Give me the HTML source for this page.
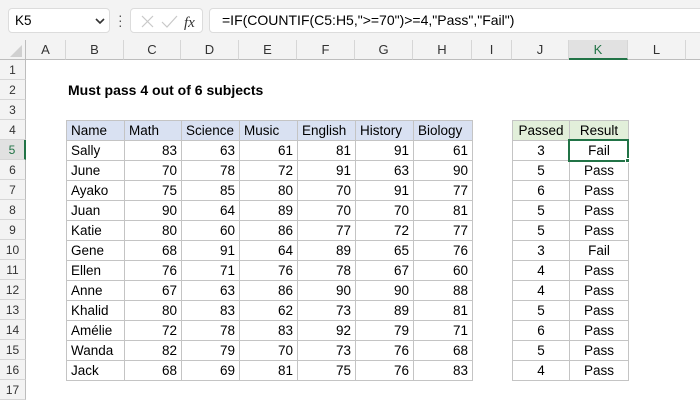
<!DOCTYPE html>
<html><head><meta charset="utf-8"><style>
*{box-sizing:border-box;margin:0;padding:0}
body{width:700px;height:400px;overflow:hidden;background:#fff;font-family:"Liberation Sans",sans-serif;font-size:13.5px;color:#000;position:relative}
.a{position:absolute}
.top{left:0;top:0;width:700px;height:40px;background:#f3f3f3}
.box{background:#fff;border:1px solid #dcdcdc;border-radius:4px}
.ch{top:40px;height:20px;background:#f3f3f3;border-right:1px solid #d6d6d6;border-bottom:1px solid #bdbdbd;text-align:center;line-height:19px;color:#333;font-size:13px}
.rh{left:0;width:26px;height:20px;background:#f3f3f3;border-bottom:1px solid #d6d6d6;border-right:1px solid #bdbdbd;text-align:center;line-height:20px;color:#333;font-size:12px}
.c{height:21px;border:1px solid #c4c4c4;line-height:20px;padding:0 4px;white-space:nowrap}
.r{text-align:right}.m{text-align:center}
</style></head><body>
<div class="a top"></div>
<div class="a box" style="left:8px;top:8px;width:102px;height:25px;line-height:23px;padding-left:6px">K5</div>
<svg class="a" style="left:95px;top:17px" width="10" height="8"><path d="M1 2 L5 6 L9 2" stroke="#333" stroke-width="1.6" fill="none"/></svg>
<div class="a" style="left:118px;top:13px;width:3px;height:14px;color:#555;font-size:14px;line-height:5px">·<br>·<br>·</div>
<div class="a box" style="left:130px;top:8px;width:73px;height:25px"></div>
<svg class="a" style="left:140px;top:14px" width="60" height="16"><path d="M2 2 L13 13 M13 2 L2 13" stroke="#c8c8c8" stroke-width="1.2"/><path d="M22 8 L27 13 L37 2" stroke="#c8c8c8" stroke-width="1.2" fill="none"/><text x="44" y="13" font-family="Liberation Serif" font-style="italic" font-size="15" fill="#333">fx</text></svg>
<div class="a box" style="left:209px;top:8px;width:500px;height:25px;line-height:23px;padding-left:12px;font-size:14px">=IF(COUNTIF(C5:H5,"&gt;=70")&gt;=4,"Pass","Fail")</div>
<div class="a" style="left:0;top:40px;width:26px;height:20px;background:#f3f3f3;border-right:1px solid #bdbdbd;border-bottom:1px solid #bdbdbd"></div>
<svg class="a" style="left:10px;top:45px" width="13" height="12"><path d="M12 0 L12 12 L0 12 Z" fill="#d0d0d0"/></svg>
<div id="g"></div>
<script>
var cols=[["A",26,66],["B",66,124],["C",124,181],["D",181,239],["E",239,297],["F",297,355],["G",355,413],["H",413,472],["I",472,512],["J",512,569],["K",569,628],["L",628,686],["M",686,744]];
var h="";
cols.forEach(function(c){var s=c[0]=="K";h+='<div class="a ch" style="left:'+c[1]+'px;width:'+(c[2]-c[1])+'px;'+(s?'background:#e1e1e1;border-bottom:2px solid #217346;color:#217346':'')+'">'+c[0]+'</div>';});
for(var r=1;r<=17;r++){var s=r==5;h+='<div class="a rh" style="top:'+(60+(r-1)*20)+'px;'+(s?'background:#e1e1e1;border-right:2px solid #217346;color:#217346':'')+'">'+r+'</div>';}
h+='<div class="a" style="left:68px;top:82px;font-weight:bold;font-size:14px">Must pass 4 out of 6 subjects</div>';
var hd=["Name","Math","Science","Music","English","History","Biology"];
var d=[["Sally",83,63,61,81,91,61,3,"Fail"],["June",70,78,72,91,63,90,5,"Pass"],["Ayako",75,85,80,70,91,77,6,"Pass"],["Juan",90,64,89,70,70,81,5,"Pass"],["Katie",80,60,86,77,72,77,5,"Pass"],["Gene",68,91,64,89,65,76,3,"Fail"],["Ellen",76,71,76,78,67,60,4,"Pass"],["Anne",67,63,86,90,90,88,4,"Pass"],["Khalid",80,83,62,73,89,81,5,"Pass"],["Amélie",72,78,83,92,79,71,6,"Pass"],["Wanda",82,79,70,73,76,68,5,"Pass"],["Jack",68,69,81,75,76,83,4,"Pass"]];
function cell(x1,x2,y,t,cl,st){return '<div class="a c '+cl+'" style="left:'+x1+'px;top:'+y+'px;width:'+(x2-x1+1)+'px;'+(st||'')+'">'+t+'</div>';}
for(var i=0;i<7;i++)h+=cell(cols[i+1][1],cols[i+1][2],120,hd[i],"","background:#d9e1f2");
h+=cell(512,569,120,"Passed","m","background:#e2efda");h+=cell(569,628,120,"Result","m","background:#e2efda");
d.forEach(function(row,k){var y=140+k*20;for(var i=0;i<7;i++)h+=cell(cols[i+1][1],cols[i+1][2],y,row[i],i?"r":"");h+=cell(512,569,y,row[7],"m");h+=cell(569,628,y,row[8],"m");});
h+='<div class="a" style="left:568px;top:139px;width:61px;height:23px;border:2px solid #217346"></div><div class="a" style="left:625px;top:158px;width:5px;height:5px;background:#217346;border:1px solid #fff"></div>';
document.getElementById("g").innerHTML=h;
</script>
</body></html>
